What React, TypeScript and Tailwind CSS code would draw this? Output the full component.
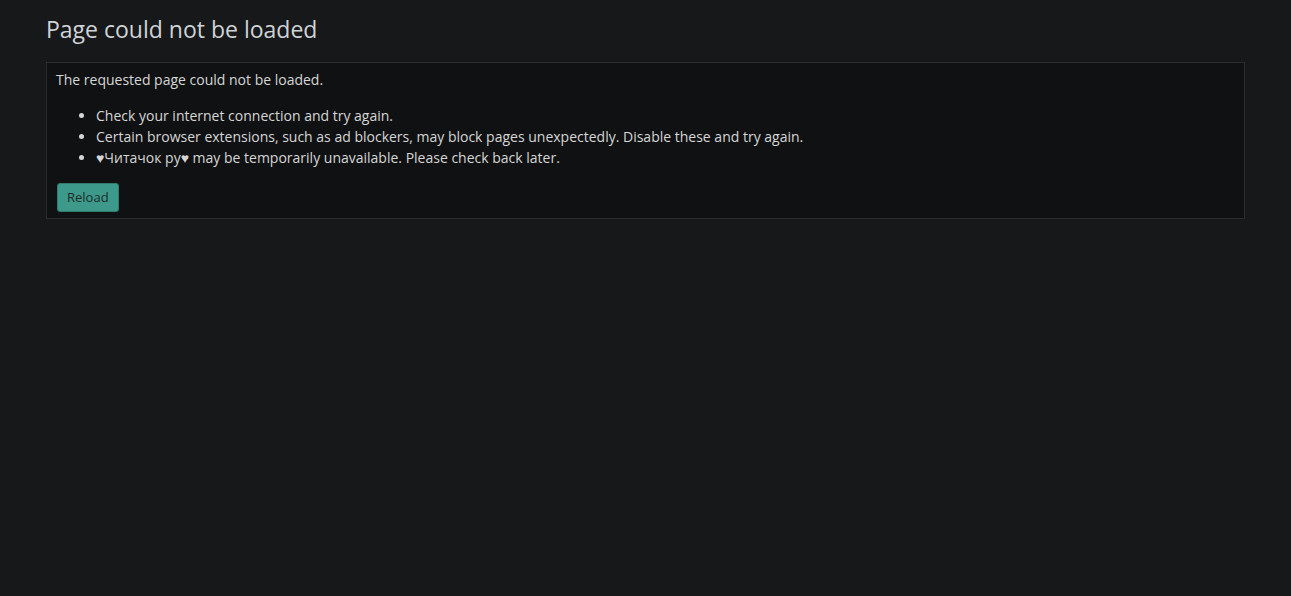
import React from 'react';

const items = [
  'Check your internet connection and try again.',
  'Certain browser extensions, such as ad blockers, may block pages unexpectedly. Disable these and try again.',
  '♥Читачок ру♥ may be temporarily unavailable. Please check back later.',
];

export default function App() {
  return (
    <div
      className="min-h-[596px] bg-[#17181a] px-[46px] pt-[13px] text-[#d6d6d6]"
      style={{ fontFamily: '"Open Sans", "Noto Sans", sans-serif' }}
    >
      <h1 className="text-[23px] leading-[32px] text-[#cfd3d6]">Page could not be loaded</h1>
      <div className="mt-[17px] border border-[#2b2c2e] bg-[#101113] px-[10px] pt-[6px] pb-[6px]">
        <p className="ml-[-1px] text-[14px] leading-[21px]">The requested page could not be loaded.</p>
        <ul className="mt-[15px] list-disc pl-[39px] text-[14px] leading-[21px]">
          {items.map((t) => (
            <li key={t}>{t}</li>
          ))}
        </ul>
        <button className="mt-[15px] h-[29px] rounded-[3px] border border-[#2f7b6e] bg-[#3d9a8b] px-[9px] text-[13px] text-[#1c2a28]">
          Reload
        </button>
      </div>
    </div>
  );
}
